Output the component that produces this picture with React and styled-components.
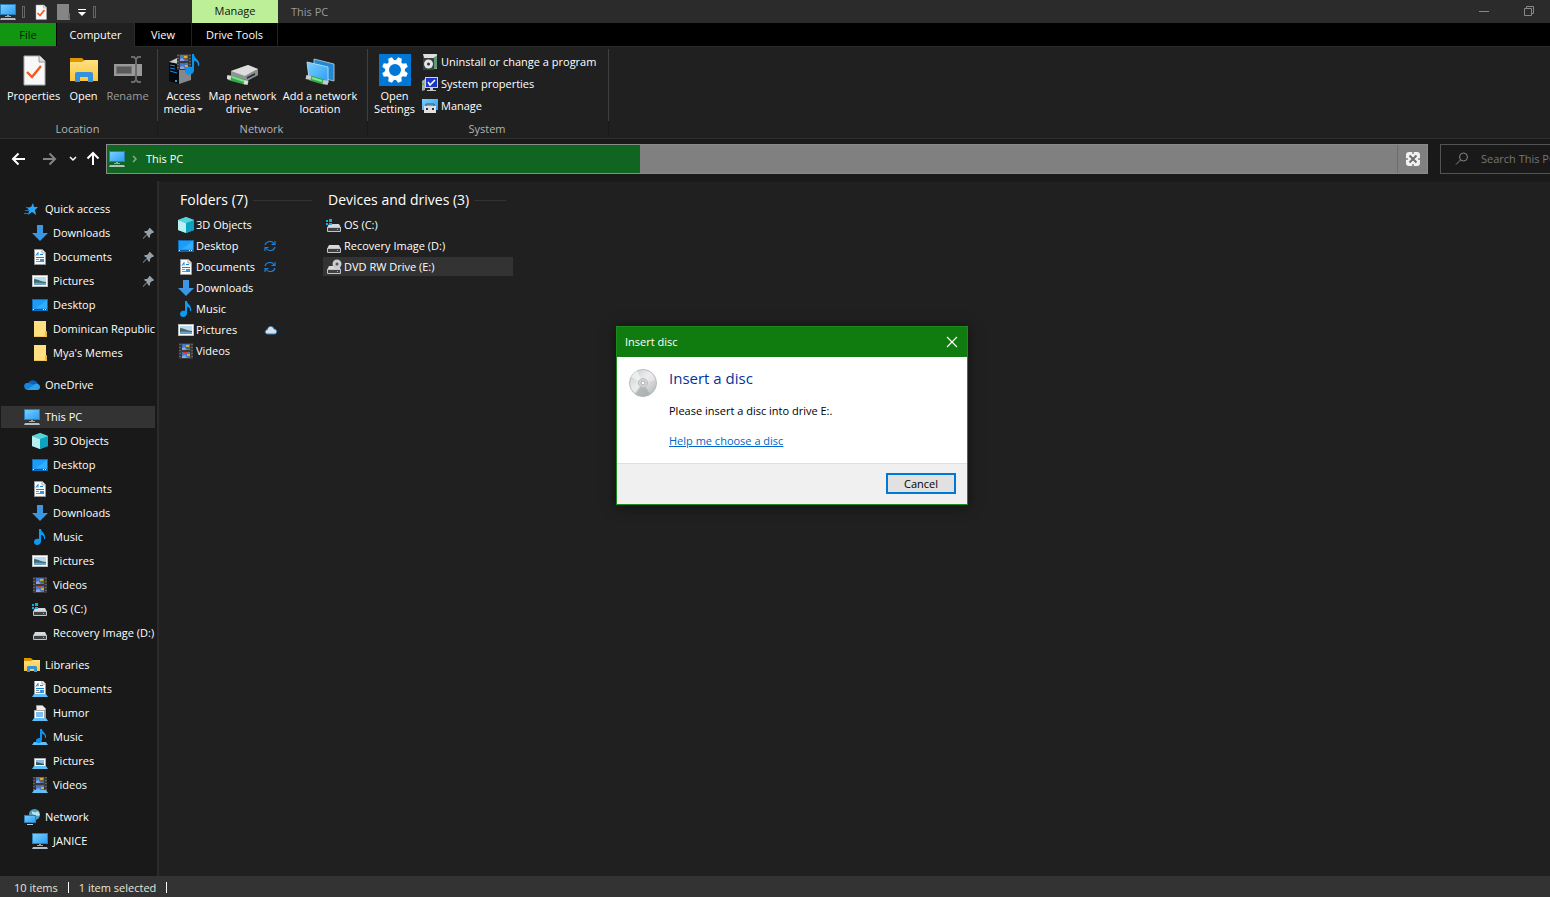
import React from 'react';
import styled, { createGlobalStyle } from 'styled-components';

const GlobalStyle = createGlobalStyle`
  * {
    box-sizing: border-box;
  }

  body {
    margin: 0;
    background: #202020;
    color: #fff;
    font-family: "Open Sans", "Noto Sans", sans-serif;
    font-size: 11px;
    line-height: 16px;
  }

  button, input {
    font: inherit;
    color: inherit;
    margin: 0;
    padding: 0;
    border: none;
    background: none;
  }

  a {
    color: inherit;
    text-decoration: none;
  }

  svg {
    display: block;
    flex: none;
  }
`;

// --- Window frame ---
const Window = styled.div`
  position: relative;
  display: flex;
  flex-direction: column;
  height: 100vh;
  overflow: hidden;
`;

const TitleBar = styled.header`
  display: flex;
  height: 23px;
  background: #2b2b2b;
`;

const QuickTools = styled.div`
  display: flex;
  align-items: center;
  gap: 6px;
  width: 192px;
`;

const ToolButton = styled.button`
  display: flex;
  justify-content: center;
`;

const Grip = styled.span`
  width: 3px;
  height: 12px;
  margin-right: 2px;
  border: 1px solid #666;
`;

const ContextTab = styled.div`
  width: 86px;
  line-height: 21px;
  text-align: center;
  color: #111;
  background: #bdee98;
`;

const WindowTitle = styled.div`
  flex: 1;
  padding-left: 13px;
  line-height: 23px;
  color: #9b9b9b;
`;

const WindowButton = styled.button`
  display: flex;
  justify-content: center;
  align-items: center;
  width: 42px;
  height: 21px;
  margin-left: 3px;
`;

// --- Ribbon ---
const Tabs = styled.nav`
  display: flex;
  height: 23px;
  background: #000;
`;

const Tab = styled.button`
  width: ${(p) => p.$width}px;
  height: ${(p) => (p.$active ? 24 : 23)}px;
  color: ${(p) => (p.$file ? '#061c05' : '#fff')};
  background: ${(p) => (p.$file ? '#129612' : p.$active ? '#202020' : '#000')};
  border-right: 1px solid ${(p) => (p.$active ? '#2b2b2b' : p.$edge ? '#222' : '#000')};
  z-index: 1;
`;

const Ribbon = styled.section`
  display: flex;
  height: 93px;
  padding-top: 2px;
  background: #202020;
  border-top: 1px solid #2b2b2b;
  border-bottom: 1px solid #2d2d2d;
`;

const Group = styled.div`
  display: flex;
  flex-direction: column;
  width: ${(p) => p.$width}px;
`;

const GroupBody = styled.div`
  display: flex;
  align-items: flex-start;
  height: 72px;
  padding-left: ${(p) => p.$pad}px;
  padding-top: 5px;
  border-right: 1px solid #404040;
`;

const GroupLabel = styled.div`
  line-height: 15px;
  padding-right: 2px;
  text-align: center;
  color: #b4b4b4;
  border-right: 1px solid #191919;
`;

const BigButton = styled.button`
  display: flex;
  flex-direction: column;
  align-items: center;
  gap: 3px;
  width: ${(p) => p.$width}px;
  line-height: 13px;
  white-space: nowrap;
  color: ${(p) => (p.disabled ? '#9d9d9d' : '#fff')};
`;

const Caret = styled.i`
  display: inline-block;
  margin-left: 2px;
  vertical-align: 2px;
  border: 3px solid transparent;
  border-top-color: #ddd;
  border-bottom: none;
`;

const SmallButtons = styled.div`
  display: flex;
  flex-direction: column;
  padding-left: 6px;
`;

const SmallButton = styled.button`
  display: flex;
  align-items: center;
  gap: 3px;
  height: 22px;
  margin-top: ${(p) => (p.$first ? -3 : 0)}px;
  white-space: nowrap;
`;

// --- Address row ---
const NavRow = styled.div`
  display: flex;
  align-items: center;
  height: 42px;
  padding-bottom: 2px;
  background: #191919;
`;

const Arrows = styled.div`
  display: grid;
  grid-template-columns: 30px 28px 16px 21px;
  align-items: center;
  padding-left: 11px;
`;

const AddressBar = styled.div`
  display: flex;
  flex: 1;
  align-items: center;
  gap: 6px;
  height: 30px;
  padding-left: 2px;
  border: 1px solid #8a8a8a;
  background: linear-gradient(to right, #106620 40.4%, #808080 40.4%);
`;

const Crumb = styled.a`
  flex: 1;
  padding-left: 1px;
`;

const StopButton = styled.button`
  display: flex;
  align-items: center;
  justify-content: center;
  width: 30px;
  height: 28px;
  border-left: 1px solid #6c6c6c;
`;

const SearchBox = styled.label`
  display: flex;
  align-items: center;
  gap: 12px;
  width: 110px;
  height: 30px;
  margin-left: 12px;
  padding-left: 14px;
  border: 1px solid #535353;
  border-right: none;
`;

const SearchInput = styled.input`
  flex: 1;
  min-width: 0;
  outline: none;

  &::placeholder {
    color: #777;
    opacity: 1;
  }
`;

// --- Panes ---
const Panes = styled.div`
  display: flex;
  flex: 1;
  min-height: 0;
`;

const Sidebar = styled.nav`
  display: flex;
  flex-direction: column;
  gap: 8px;
  width: 159px;
  padding-top: 16px;
  overflow: hidden;
  background: #191919;
  border-right: 2px solid #2b2b2b;
`;

const Tree = styled.ul`
  list-style: none;
  margin: 0;
  padding: 0;
`;

const TreeItem = styled.li`
  padding: 1px 2px 1px 1px;
`;

const TreeLink = styled.a`
  display: flex;
  align-items: center;
  gap: 5px;
  height: 22px;
  padding-left: ${(p) => (p.$root ? 23 : 31)}px;
  white-space: nowrap;
  background: ${(p) => (p.$selected ? '#333' : 'transparent')};
`;

const TreeLabel = styled.span`
  flex: 1;
`;

const Content = styled.main`
  display: flex;
  align-items: flex-start;
  flex: 1;
  gap: 10px;
  padding: 8px 0 0 16px;
  background: #202020;
  border-top: 1px solid #1b1b1b;
`;

const Section = styled.section`
  width: ${(p) => p.$width}px;
`;

const SectionTitle = styled.h2`
  display: flex;
  align-items: center;
  gap: 5px;
  margin: 0 0 5px;
  padding: 0 ${(p) => p.$right}px 0 5px;
  font-size: 14px;
  font-weight: 400;
  line-height: 20px;
  white-space: nowrap;

  &::after {
    content: '';
    flex: 1;
    height: 1px;
    background: #333;
  }
`;

const FileRow = styled.a`
  display: flex;
  align-items: center;
  gap: 2px;
  height: 19px;
  margin-bottom: 2px;
  padding-left: 3px;
  white-space: nowrap;
  background: ${(p) => (p.$selected ? '#333' : 'transparent')};
`;

const FileName = styled.span`
  width: 66px;
`;

const StatusBar = styled.footer`
  display: flex;
  align-items: center;
  gap: 10px;
  height: 21px;
  padding: 2px 0 0 14px;
  background: #333;
  color: #e6e6d8;
`;

const Divider = styled.span`
  width: 1px;
  height: 11px;
  background: #fff;
`;

// --- Dialog ---
const Dialog = styled.div`
  position: absolute;
  top: 326px;
  left: 616px;
  width: 352px;
  color: #000;
  background: #fff;
  border: 1px solid #1c8a1c;
  box-shadow: 0 2px 12px rgba(0, 0, 0, 0.5);
`;

const DialogTitle = styled.div`
  display: flex;
  align-items: center;
  justify-content: space-between;
  height: 30px;
  padding: 0 9px 0 8px;
  color: #fff;
  background: #107c10;
`;

const DialogBody = styled.div`
  display: flex;
  align-items: flex-start;
  gap: 12px;
  padding: 12px 12px 14px;
`;

const DialogText = styled.div`
  display: flex;
  flex-direction: column;
  align-items: flex-start;
  gap: 14px;
`;

const Heading = styled.h1`
  margin: 0;
  padding-bottom: 2px;
  font-size: 15px;
  font-weight: 400;
  line-height: 18px;
  color: #003399;
`;

const HelpLink = styled.a`
  color: #0066cc;
  text-decoration: underline;
`;

const DialogFooter = styled.div`
  display: flex;
  justify-content: flex-end;
  padding: 9px 11px 10px;
  background: #f0f0f0;
  border-top: 1px solid #dfdfdf;
`;

const CancelButton = styled.button`
  width: 70px;
  height: 21px;
  line-height: 17px;
  background: #e1e1e1;
  border: 2px solid #0078d7;
`;

// --- Icons ---
const Icon = ({ size = 16, box = 16, children }) => (
  <svg width={size} height={size} viewBox={`0 0 ${box} ${box}`} aria-hidden="true">
    {children}
  </svg>
);

const Defs = styled.svg`
  position: absolute;
`;

const Gradients = () => (
  <Defs width="0" height="0" aria-hidden="true">
    <defs>
      <linearGradient id="screen" x1="0" y1="0" x2="1" y2="1">
        <stop offset="0" stopColor="#7cd0ff" />
        <stop offset="1" stopColor="#2a9df4" />
      </linearGradient>
      <linearGradient id="folder" x1="0" y1="0" x2="0" y2="1">
        <stop offset="0" stopColor="#ffe082" />
        <stop offset="1" stopColor="#fcc63c" />
      </linearGradient>
      <linearGradient id="disc" x1="0" y1="0" x2="1" y2="1">
        <stop offset="0" stopColor="#c2c8c8" />
        <stop offset="0.45" stopColor="#eceeee" />
        <stop offset="1" stopColor="#a9afaf" />
      </linearGradient>
    </defs>
  </Defs>
);

const PcIcon = () => (
  <Icon>
    <rect x="0.5" y="0.5" width="15" height="10" fill="url(#screen)" stroke="#2b7fb5" />
    <path d="M7 11h2v1h2v1H5v-1h2z" fill="#9aa7b1" />
    <path d="M1 14h14l1 2H0z" fill="#b4bec6" />
  </Icon>
);

const CheckDoc = ({ size = 16 }) => (
  <Icon size={size} box={32}>
    <path d="M6 2h16l5 5v24H6z" fill="#f8f8f8" stroke="#aaa" />
    <path d="M21 2v6h6" fill="#ddd" stroke="#999" />
    <path d="M9 18l5 5 9-11" fill="none" stroke="#f2591d" strokeWidth={size > 16 ? 2.4 : 3.4} />
  </Icon>
);

const GreyDoc = () => (
  <Icon>
    <path d="M2 0h12v10h1v6H2z" fill="#858585" />
    <path d="M13 9h2v6h-2z" fill="#707070" />
  </Icon>
);

const OpenFolder = () => (
  <Icon size={32} box={32}>
    <path d="M2 4h12l3 3v5H2z" fill="#dd9600" />
    <path d="M2 8h12l3-2h13v21H2z" fill="url(#folder)" />
    <path d="M7 28v-8q0-2 2-2h14q2 0 2 2v8h-5v-5h-8v5z" fill="#3292dc" />
  </Icon>
);

const LibraryFolder = () => (
  <Icon>
    <path d="M0 1h7l2 2v3H0z" fill="#dd9600" />
    <path d="M0 4h7l2-1h7v11H0z" fill="url(#folder)" />
    <path d="M3 15v-5l1-1h8l1 1v5h-3v-3H6v3z" fill="#3292dc" />
  </Icon>
);

const RenameIcon = () => (
  <Icon size={32} box={32}>
    <path d="M2 10h28v12H2z" fill="#999" />
    <path d="M4.500 12.500h15v7h-15z" fill="#5a5a5a" stroke="#777" />
    <path d="M19 3h3l2 2 2-2h3M19 28h3l2-2 2 2h3M24 5v21" fill="none" stroke="#6a6a6a" strokeWidth="2" />
  </Icon>
);

const Film = () => (
  <>
    <rect x="1" y="0" width="14" height="16" fill="#3b3938" />
    <path d="M2 1v15M14 1v15" stroke="#8a8a8a" strokeDasharray="1 2" />
    <rect x="4" y="1" width="8" height="6" fill="#4a76c4" />
    <rect x="4" y="9" width="8" height="6" fill="#4a76c4" />
    <path d="M4 5l3-1 1 3H4zM4 13l3-1 2 3H4z" fill="#86a7dc" />
    <path d="M8 2h3v2H8zM9 11h3v2H9z" fill="#d9ab35" />
    <path d="M7 4h2v1H7zM5 9h4v1H5z" fill="#c23a30" />
    <path d="M9 4h3v2H9z" fill="#37793c" />
  </>
);

const VideoIcon = () => (
  <Icon>
    <Film />
  </Icon>
);

const MusicIcon = () => (
  <Icon>
    <path d="M7 0h2c0 3 5 4 4 10h-1c0-3-1-4-3-4v6c0 5-7 5-7 1 0-3 3-4 5-3z" fill="#0a9cf5" />
  </Icon>
);

const MediaIcon = () => (
  <Icon size={32} box={32}>
    <path d="M1 8l10 2v20l-10-3z" fill="#05080c" />
    <path d="M11 10l12-2v18l-12 4z" fill="#85888c" />
    <path d="M1 8l8-4 14 4-12 2z" fill="#c9ccce" />
    <path d="M2 11l5 1M2 14l5 1M2 17l7 2" stroke="#1a8be0" />
    <circle cx="8" cy="27" r="1" fill="#3cc7ff" />
    <g transform="translate(8 0)">
      <Film />
    </g>
    <path d="M24 0h2c0 5 7 6 5 12h-1c0-4-2-5-4-5v9c0 6-9 6-9 1 0-4 4-5 7-4z" fill="#0a94ee" />
  </Icon>
);

const NetDriveIcon = () => (
  <Icon size={32} box={32}>
    <path d="M4 17l17-6 10 4v6l-13 7L4 22z" fill="#8f9395" />
    <path d="M4 17l17-6 10 4-13 7z" fill="#dcdcdc" />
    <path d="M18 22l13-7v6l-13 7z" fill="#8b8e90" />
    <path d="M20 23l8-4v2l-8 4z" fill="#2e3133" />
    <path d="M3 24l15 4" stroke="#3aa64a" strokeWidth="5" strokeLinecap="round" />
    <path d="M5 23l12 4" stroke="#74e383" strokeWidth="2" />
    <path d="M0 23l4 1M17 28l4 1" stroke="#ddd" strokeWidth="4" />
  </Icon>
);

const NetPlaceIcon = () => (
  <Icon size={32} box={32}>
    <path d="M10 5l20 5v17l-20-5z" fill="#2388d2" stroke="#a7bcc9" />
    <path d="M3 8l21 5v16L5 24z" fill="url(#screen)" stroke="#a9d9f5" />
    <path d="M6 24l14 4" stroke="#38a84a" strokeWidth="5" />
    <path d="M8 24l10 3" stroke="#80ea8b" strokeWidth="2" />
    <path d="M2 23l5 1M19 28l5 1" stroke="#ccc" strokeWidth="4" />
  </Icon>
);

const GearIcon = () => (
  <Icon size={32} box={32}>
    <rect width="32" height="32" fill="#0078d7" />
    <circle cx="16" cy="16" r="8" fill="none" stroke="#fff" strokeWidth="4" />
    {[0, 45, 90, 135, 180, 225, 270, 315].map((a) => (
      <path key={a} d="M13 7l1-4h4l1 4z" fill="#fff" transform={`rotate(${a + 22.5} 16 16)`} />
    ))}
  </Icon>
);

const UninstallIcon = () => (
  <Icon>
    <path d="M2 1h13v14H2z" fill="#b3b2a8" />
    <path d="M1 0h14l-1 4H2z" fill="#dedfdb" />
    <path d="M10 4h4v11h-4z" fill="#d69b6a" />
    <path d="M12 3l3-1v12l-3 1z" fill="#5b9b78" />
    <rect x="1" y="4" width="11" height="12" fill="#3c4044" />
    <circle cx="6.5" cy="10" r="4.5" fill="#e3e6e8" />
    <circle cx="6.5" cy="10" r="1.5" fill="#333" />
  </Icon>
);

const SystemIcon = () => (
  <Icon>
    <path d="M0 5l3-2v11l-3 1z" fill="#aaa" />
    <path d="M1 7v2" stroke="#39c934" strokeWidth="2" />
    <rect x="3.5" y="1.5" width="12" height="10" fill="#1a36c8" stroke="#d4d4d4" />
    <path d="M6 6l2 3 5-5" fill="none" stroke="#fff" strokeWidth="1.5" />
    <path d="M8 12h3v2h3v1H5v-1h3z" fill="#c9c9c9" />
  </Icon>
);

const ManageIcon = () => (
  <Icon>
    <rect x="0" y="1" width="16" height="11" fill="url(#screen)" />
    <path d="M4 8V6h8v2" fill="none" stroke="#555" />
    <rect x="2" y="8" width="12" height="7" fill="#e0e0e0" />
    <path d="M4 10h2v2H4zM10 10h2v2h-2z" fill="#333" />
  </Icon>
);

const StarIcon = () => (
  <Icon>
    <path d="M9 2l1 4h4l-3 3 1 5-4-3-4 3 1-4-2-4h4z" fill="#2ea5f5" />
    <path d="M2 6.500h4M1 9.500h5M0 12.500h4" stroke="#1678b8" />
  </Icon>
);

const DownloadIcon = () => (
  <Icon>
    <path d="M5 0h6v8h5l-8 8-8-8h5z" fill="#3b97e3" />
  </Icon>
);

const DocShape = () => (
  <>
    <path d="M2.500 0.500h8l3 3v12h-11z" fill="#fafafa" stroke="#999" />
    <path d="M10 1v3h3" fill="none" stroke="#aaa" />
    <path d="M4 6.500l2-3v3M8 5.500h3M4 8.500h8" fill="none" stroke="#1683d8" />
    <path d="M4 10.500h3M4 12.500h8" stroke="#8d8d8d" />
    <rect x="8" y="10" width="4" height="3" fill="#3a93d8" />
  </>
);

const DocIcon = () => (
  <Icon>
    <DocShape />
  </Icon>
);

const PictureIcon = () => (
  <Icon>
    <rect x="0.500" y="2.500" width="15" height="11" fill="#fff" stroke="#bbb" />
    <rect x="2" y="4" width="12" height="8" fill="#b9daf2" />
    <path d="M2 6c4 0 7 3 12 3v3H2z" fill="#3c6b68" />
    <path d="M2 10c4-1 8 0 12 0v2H2z" fill="#6b9fc4" />
  </Icon>
);

const DesktopIcon = () => (
  <Icon>
    <rect x="0.500" y="2.500" width="15" height="11" fill="#1a9cf8" stroke="#0f6cb5" />
    <path d="M15 3v8H4z" fill="#32adff" />
    <path d="M1 12.500h14" stroke="#0c5a9c" />
    <path d="M1 12.500h1M11 12.500h1M13 12.500h1" stroke="#fff" />
  </Icon>
);

const FolderIcon = () => (
  <Icon>
    <path d="M2 0h12v10l1 1v5H2z" fill="#ffdf80" />
    <path d="M14 10l1 1v5h-2v-5z" fill="#e8b93c" />
    <path d="M2 15.500h12" stroke="#f0c55a" />
  </Icon>
);

const OneDriveIcon = () => (
  <Icon>
    <path d="M4 7c1-5 8-5 10 0l-5 4H3z" fill="#0c5fb4" />
    <path d="M3 6c-4 0-4 7 1 7l9-4-5-2c-2-1-3-1-5-1z" fill="#1684d8" />
    <path d="M3 13l8-6c3-1 5 1 5 3s-1 3-3 3z" fill="#2ba3ec" />
  </Icon>
);

const CubeIcon = () => (
  <Icon>
    <path d="M8 0l8 3v10l-8 3-8-3V3z" fill="#35bccb" />
    <path d="M0 3l8 3v10l-8-3z" fill="#b8f0f2" />
    <path d="M8 6l8-3v10l-8 3z" fill="#0ea2c0" />
    <path d="M8 0l8 3-8 3-8-3z" fill="#56d3dd" />
  </Icon>
);

const DriveShape = () => (
  <>
    <path d="M3 7h10l2 4H1z" fill="#d6d8da" />
    <rect x="1" y="10" width="14" height="5" rx="1" fill="#c1c3c5" />
    <rect x="2" y="11" width="12" height="3" fill="#3f4244" />
    <rect x="11" y="12" width="1" height="1" fill="#5fe45f" />
  </>
);

const DriveIcon = () => (
  <Icon>
    <DriveShape />
  </Icon>
);

const OsDriveIcon = () => (
  <Icon>
    <DriveShape />
    <path d="M0 3h2v2H0zM3 2h3v3H3zM0 6h2v2H0zM3 6h3v2H3z" fill="#00b4f0" />
  </Icon>
);

const DvdIcon = () => (
  <Icon>
    <DriveShape />
    <circle cx="11" cy="5" r="4.500" fill="#c9cccd" />
    <circle cx="11" cy="5" r="1.500" fill="#555" />
  </Icon>
);

const LibBase = () => <path d="M2 13h12l2 3H0z" fill="#62bff5" />;

const LibDocIcon = () => (
  <Icon>
    <g transform="translate(0 -1)">
      <DocShape />
    </g>
    <LibBase />
  </Icon>
);

const LibIcon = () => (
  <Icon>
    <path d="M4.500 0.500h6l3 3v10h-9z" fill="#eee" stroke="#999" />
    <rect x="2.500" y="5.500" width="10" height="8" fill="#fff" stroke="#aaa" />
    <rect x="4" y="7" width="7" height="5" fill="#7fbdea" />
    <LibBase />
  </Icon>
);

const LibMusicIcon = () => (
  <Icon>
    <LibBase />
    <path d="M8 0h2c0 3 5 4 4 9h-1c0-3-1-4-3-4v6c0 4-6 4-6 1s3-3 4-3z" fill="#0a94ee" />
  </Icon>
);

const LibPictureIcon = () => (
  <Icon>
    <rect x="2.500" y="5.500" width="11" height="8" fill="#fff" stroke="#aaa" />
    <rect x="4" y="7" width="8" height="5" fill="#8bb9df" />
    <path d="M4 9l8 2v1H4z" fill="#2c5d55" />
    <LibBase />
  </Icon>
);

const LibVideoIcon = () => (
  <Icon>
    <g transform="translate(0 -1)">
      <Film />
    </g>
    <LibBase />
  </Icon>
);

const NetworkIcon = () => (
  <Icon>
    <circle cx="10.500" cy="5.500" r="5.500" fill="#4c9dbf" />
    <path d="M8 2c2 2 5 1 6 0l2 4c-3 2-5 0-8-1z" fill="#b6e0ea" />
    <rect x="0.500" y="6.500" width="11" height="7" fill="url(#screen)" stroke="#2b7fb5" />
    <path d="M3 15.500h6" stroke="#c0c8ce" />
  </Icon>
);

const PinIcon = () => (
  <Icon size={12} box={12}>
    <path d="M7 1l4 4-1 1-1 0-2 2 0 2-1 1-2-3-3 3-1 1 0-1 4-4-3-2 1-1 2 0 2-2 0-1z" fill="#95a1aa" />
  </Icon>
);

const SyncIcon = () => (
  <Icon size={12} box={12}>
    <path d="M1 5c1-4 7-5 9-1M11 1v3.500H7.500M11 7c-1 4-7 5-9 1M1 11V7.500h3.500" fill="none" stroke="#1a7fd6" strokeWidth="1.200" />
  </Icon>
);

const CloudIcon = () => (
  <Icon size={14} box={14}>
    <path d="M3.500 11c-3 0-3-4 0-4.500 0-4 6-4 6.500-.5 3.500 0 3.500 5 .5 5z" fill="#dcdfe2" stroke="#2182cf" />
  </Icon>
);

const DiscIcon = () => (
  <Icon size={28} box={28}>
    <circle cx="14" cy="14" r="13.500" fill="url(#disc)" stroke="#b8bcbc" />
    <path d="M14 14L6 25q8 5 15 0z" fill="#a2a8a8" opacity="0.700" />
    <path d="M14 14L2 8q3-5 6-6z" fill="#f2f6f3" opacity="0.700" />
    <path d="M14 14l7-11q4 3 5 8z" fill="#f3e8f2" opacity="0.600" />
    <circle cx="14" cy="14" r="4.500" fill="#d4d7d7" stroke="#bbb" />
    <circle cx="14" cy="14" r="2" fill="#fff" stroke="#aaa" />
  </Icon>
);

const Arrow = ({ turn = 0, color = '#fff' }) => (
  <Icon>
    <path
      d="M14 8H2M7.500 2.500L2 8l5.500 5.500"
      fill="none"
      stroke={color}
      strokeWidth="2"
      transform={`rotate(${turn} 8 8)`}
    />
  </Icon>
);

// --- Data ---
const places = [
  { label: 'Downloads', icon: DownloadIcon, pinned: true },
  { label: 'Documents', icon: DocIcon, pinned: true },
  { label: 'Pictures', icon: PictureIcon, pinned: true },
  { label: 'Desktop', icon: DesktopIcon },
  { label: 'Dominican Republic', icon: FolderIcon },
  { label: "Mya's Memes", icon: FolderIcon },
];

const tree = [
  { label: 'Quick access', icon: StarIcon, items: places },
  { label: 'OneDrive', icon: OneDriveIcon, items: [] },
  {
    label: 'This PC',
    icon: PcIcon,
    selected: true,
    items: [
      { label: '3D Objects', icon: CubeIcon },
      { label: 'Desktop', icon: DesktopIcon },
      { label: 'Documents', icon: DocIcon },
      { label: 'Downloads', icon: DownloadIcon },
      { label: 'Music', icon: MusicIcon },
      { label: 'Pictures', icon: PictureIcon },
      { label: 'Videos', icon: VideoIcon },
      { label: 'OS (C:)', icon: OsDriveIcon },
      { label: 'Recovery Image (D:)', icon: DriveIcon },
    ],
  },
  {
    label: 'Libraries',
    icon: LibraryFolder,
    items: [
      { label: 'Documents', icon: LibDocIcon },
      { label: 'Humor', icon: LibIcon },
      { label: 'Music', icon: LibMusicIcon },
      { label: 'Pictures', icon: LibPictureIcon },
      { label: 'Videos', icon: LibVideoIcon },
    ],
  },
  { label: 'Network', icon: NetworkIcon, items: [{ label: 'JANICE', icon: PcIcon }] },
];

const folders = [
  { label: '3D Objects', icon: CubeIcon },
  { label: 'Desktop', icon: DesktopIcon, status: SyncIcon },
  { label: 'Documents', icon: DocIcon, status: SyncIcon },
  { label: 'Downloads', icon: DownloadIcon },
  { label: 'Music', icon: MusicIcon },
  { label: 'Pictures', icon: PictureIcon, status: CloudIcon },
  { label: 'Videos', icon: VideoIcon },
];

const drives = [
  { label: 'OS (C:)', icon: OsDriveIcon },
  { label: 'Recovery Image (D:)', icon: DriveIcon },
  { label: 'DVD RW Drive (E:)', icon: DvdIcon, selected: true },
];

function TreeRow({ item, root }) {
  const ItemIcon = item.icon;
  return (
    <TreeItem>
      <TreeLink href="#" $root={root} $selected={item.selected}>
        <ItemIcon />
        <TreeLabel>{item.label}</TreeLabel>
        {item.pinned && <PinIcon />}
      </TreeLink>
    </TreeItem>
  );
}

function FileList({ title, files, width, right }) {
  return (
    <Section $width={width}>
      <SectionTitle $right={right}>{title}</SectionTitle>
      {files.map(({ label, icon: FileIcon, status: Status, selected }) => (
        <FileRow key={label} href="#" $selected={selected}>
          <FileIcon />
          <FileName>{label}</FileName>
          {Status && <Status />}
        </FileRow>
      ))}
    </Section>
  );
}

function RibbonBar() {
  return (
    <Ribbon>
      <Group $width={158}>
        <GroupBody $pad={5}>
          <BigButton $width={57}><CheckDoc size={32} />Properties</BigButton>
          <BigButton $width={43}><OpenFolder />Open</BigButton>
          <BigButton $width={45} disabled><RenameIcon />Rename</BigButton>
        </GroupBody>
        <GroupLabel>Location</GroupLabel>
      </Group>
      <Group $width={210}>
        <GroupBody $pad={4}>
          <BigButton $width={43}>
            <MediaIcon />
            <span>Access<br />media<Caret /></span>
          </BigButton>
          <BigButton $width={75}>
            <NetDriveIcon />
            <span>Map network<br />drive<Caret /></span>
          </BigButton>
          <BigButton $width={80}>
            <NetPlaceIcon />
            <span>Add a network<br />location</span>
          </BigButton>
        </GroupBody>
        <GroupLabel>Network</GroupLabel>
      </Group>
      <Group $width={241}>
        <GroupBody $pad={5}>
          <BigButton $width={43}>
            <GearIcon />
            <span>Open<br />Settings</span>
          </BigButton>
          <SmallButtons>
            <SmallButton $first><UninstallIcon />Uninstall or change a program</SmallButton>
            <SmallButton><SystemIcon />System properties</SmallButton>
            <SmallButton><ManageIcon />Manage</SmallButton>
          </SmallButtons>
        </GroupBody>
        <GroupLabel>System</GroupLabel>
      </Group>
    </Ribbon>
  );
}

function InsertDisc() {
  return (
    <Dialog role="dialog" aria-labelledby="dialog-title">
      <DialogTitle>
        <span id="dialog-title">Insert disc</span>
        <button type="button" aria-label="Close">
          <Icon size={12} box={12}>
            <path d="M1 1l10 10M11 1L1 11" stroke="#fff" strokeWidth="1.200" />
          </Icon>
        </button>
      </DialogTitle>
      <DialogBody>
        <DiscIcon />
        <DialogText>
          <Heading>Insert a disc</Heading>
          <span>Please insert a disc into drive E:.</span>
          <HelpLink href="#">Help me choose a disc</HelpLink>
        </DialogText>
      </DialogBody>
      <DialogFooter>
        <CancelButton type="button">Cancel</CancelButton>
      </DialogFooter>
    </Dialog>
  );
}

export default function App() {
  return (
    <Window>
      <GlobalStyle />
      <Gradients />
      <TitleBar>
        <QuickTools>
          <PcIcon />
          <Grip />
          <ToolButton aria-label="Properties"><CheckDoc /></ToolButton>
          <ToolButton aria-label="New folder"><GreyDoc /></ToolButton>
          <ToolButton aria-label="Customize">
            <Icon size={10} box={10}>
              <path d="M1 2.500h8" stroke="#fff" />
              <path d="M1 5h8L5 9z" fill="#fff" />
            </Icon>
          </ToolButton>
          <Grip />
        </QuickTools>
        <ContextTab>Manage</ContextTab>
        <WindowTitle>This PC</WindowTitle>
        <WindowButton aria-label="Minimize">
          <Icon size={10} box={10}><path d="M0 5.500h10" stroke="#888" /></Icon>
        </WindowButton>
        <WindowButton aria-label="Restore">
          <Icon size={10} box={10}>
            <path d="M0.500 2.500h7v7h-7zM2.500 2.500v-2h7v7h-2" fill="none" stroke="#888" />
          </Icon>
        </WindowButton>
      </TitleBar>
      <Tabs>
        <Tab $width={57} $file>File</Tab>
        <Tab $width={78} $active>Computer</Tab>
        <Tab $width={57} $edge>View</Tab>
        <Tab $width={86} $edge>Drive Tools</Tab>
      </Tabs>
      <RibbonBar />
      <NavRow>
        <Arrows>
          <button type="button" aria-label="Back"><Arrow /></button>
          <button type="button" aria-label="Forward"><Arrow turn={180} color="#858585" /></button>
          <button type="button" aria-label="Recent locations">
            <Icon size={8} box={8}>
              <path d="M1 2l3 3 3-3" fill="none" stroke="#fff" strokeWidth="1.500" />
            </Icon>
          </button>
          <button type="button" aria-label="Up"><Arrow turn={90} /></button>
        </Arrows>
        <AddressBar>
          <PcIcon />
          <Icon size={8} box={8}>
            <path d="M2 1l3 3-3 3" fill="none" stroke="#8fa88f" strokeWidth="1.500" />
          </Icon>
          <Crumb href="#">This PC</Crumb>
          <StopButton aria-label="Stop">
            <Icon size={14} box={14}>
              <rect width="14" height="14" rx="3" fill="#f2f2f2" />
              <path d="M3.500 3.500l7 7M10.500 3.500l-7 7" stroke="#6e6e6e" strokeWidth="2" />
              <path d="M7 0v2M7 12v2M0 7h2M12 7h2" stroke="#808080" strokeWidth="1.500" />
            </Icon>
          </StopButton>
        </AddressBar>
        <SearchBox>
          <Icon size={14} box={14}>
            <circle cx="8.500" cy="5" r="4" fill="none" stroke="#888" />
            <path d="M5.500 8L1 12.500" stroke="#888" />
          </Icon>
          <SearchInput placeholder="Search This PC" aria-label="Search This PC" />
        </SearchBox>
      </NavRow>
      <Panes>
        <Sidebar>
          {tree.map((group) => (
            <Tree key={group.label}>
              <TreeRow item={group} root />
              {group.items.map((item) => (
                <TreeRow key={item.label} item={item} />
              ))}
            </Tree>
          ))}
        </Sidebar>
        <Content>
          <FileList title="Folders (7)" files={folders} width={138} right={1} />
          <FileList title="Devices and drives (3)" files={drives} width={190} right={7} />
        </Content>
      </Panes>
      <StatusBar>
        <span>10 items</span>
        <Divider />
        <span>1 item selected</span>
        <Divider />
      </StatusBar>
      <InsertDisc />
    </Window>
  );
}
